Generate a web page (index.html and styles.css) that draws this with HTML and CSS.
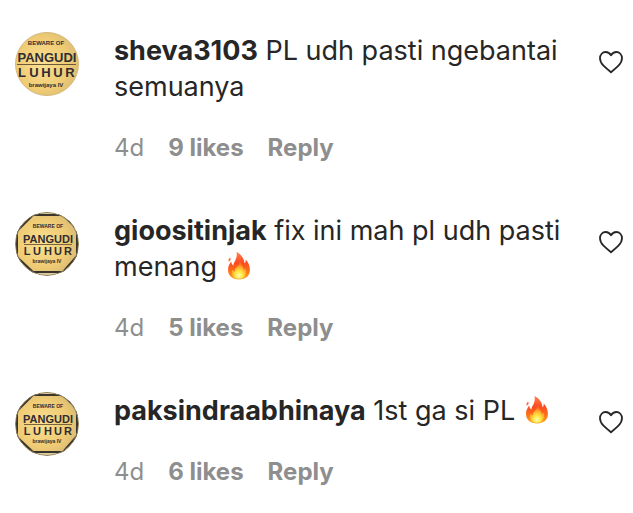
FILE: index.html
```html
<!DOCTYPE html>
<html lang="id">
<head>
<meta charset="utf-8">
<meta name="viewport" content="width=device-width, initial-scale=1">
<title>Comments</title>
<link rel="stylesheet" href="styles.css">
</head>
<body>
<svg class="defs" width="0" height="0" aria-hidden="true">
  <defs>
    <radialGradient id="gold" cx="42%" cy="50%" r="60%">
      <stop offset="0" stop-color="#fbe092"/>
      <stop offset="0.7" stop-color="#efcb74"/>
      <stop offset="1" stop-color="#dcbd75"/>
    </radialGradient>
    <linearGradient id="flame" x1="0" y1="0" x2="0" y2="1">
      <stop offset="0" stop-color="#ff8050"/>
      <stop offset="0.4" stop-color="#fb4a20"/>
      <stop offset="0.75" stop-color="#fd7a18"/>
      <stop offset="1" stop-color="#ffae28"/>
    </linearGradient>
    <radialGradient id="core" cx="50%" cy="82%" r="65%">
      <stop offset="0" stop-color="#fffbb0"/>
      <stop offset="0.4" stop-color="#ffe640"/>
      <stop offset="0.8" stop-color="#ffa52a"/>
      <stop offset="1" stop-color="#ff7a1c"/>
    </radialGradient>
    <clipPath id="round"><circle cx="32" cy="32" r="32"/></clipPath>
    <symbol id="heart" viewBox="0 0 24 24">
      <path d="M12 22.200C10.800 21.200 7.400 18.400 4.500 15.600C2.200 13.300 1 11.200 1 8.200C1 4.600 3.500 2 6.700 2C9 2 10.700 3.200 12 5.300C13.300 3.200 15 2 17.300 2C20.500 2 23 4.600 23 8.200C23 11.200 21.800 13.300 19.500 15.600C16.600 18.400 13.200 21.200 12 22.200Z" fill="none" stroke="#262626" stroke-width="1.800" stroke-linejoin="round"/>
    </symbol>
    <symbol id="fire" viewBox="0 0 28 28">
      <path d="M11.500 0C16.500 2.500 19.500 7 19.500 11.500C20.700 10.500 20.900 9 20.600 7.300C23.500 10.500 25 14.300 24.900 18C24.800 24 20.500 27.500 14 27.500C7.500 27.500 3 24 3 17.800C3 14.500 4.600 11.700 6.200 9.300C6.400 11.500 7 12.900 8.400 13.500C8.500 10 13 6.500 11.500 0Z" fill="url(#flame)"/>
      <path d="M15 9.500C16 13 18.700 14.800 18.700 18C19.800 17.500 20.300 16.500 20.500 15.500C22.500 20.500 20.500 26.700 14 26.700C8.500 26.700 5.500 22.500 7.200 17.200C8 18.700 8.700 19.200 9.700 19.400C9.300 15.500 14.500 14 15 9.500Z" fill="url(#core)"/>
      <path d="M4.800 5.800C5.800 6.300 6 7.200 5.200 8.500L3.800 9.800C3.100 8.500 3.500 7.100 4.800 5.800Z" fill="#fb6844"/>
    </symbol>
    <symbol id="badge-round" viewBox="0 0 64 64">
      <circle cx="32" cy="32" r="31.500" fill="url(#gold)" stroke="#d2b97c"/>
      <g class="badge-text">
        <text x="31" y="13" font-size="6">BEWARE OF</text>
        <text x="32" y="30" font-size="13">PANGUDI</text>
        <text x="7" y="45" font-size="13">L</text>
        <text x="19" y="45" font-size="13">U</text>
        <text x="31" y="45" font-size="13">H</text>
        <text x="43" y="45" font-size="13">U</text>
        <text x="55" y="45" font-size="13">R</text>
        <text x="31" y="55" font-size="6">brawijaya IV</text>
      </g>
      <path d="M2 32.500H61" stroke="#6c5938"/>
    </symbol>
    <symbol id="badge-octagon" viewBox="0 0 64 64">
      <g clip-path="url(#round)">
        <circle cx="32" cy="32" r="32" fill="#dccb9c"/>
        <path d="M18 3H48L62 17V44L48 60H18L2 45V19Z" fill="url(#gold)" stroke="#39342e" stroke-width="2"/>
        <circle cx="32" cy="32" r="31.500" fill="none" stroke="#8d8060"/>
      </g>
      <g class="badge-text">
        <text x="33" y="16" font-size="5">BEWARE OF</text>
        <text x="33" y="31" font-size="11">PANGUDI</text>
        <text x="12" y="43" font-size="11">L</text>
        <text x="22" y="43" font-size="11">U</text>
        <text x="33" y="43" font-size="11">H</text>
        <text x="43" y="43" font-size="11">U</text>
        <text x="53" y="43" font-size="11">R</text>
        <text x="32" y="51" font-size="5">brawijaya IV</text>
      </g>
      <path d="M9 32.500H57" stroke="#79633c"/>
    </symbol>
  </defs>
</svg>
<main class="comments">
  <article class="comment">
    <a class="avatar" href="#" aria-label="sheva3103"><svg viewBox="0 0 64 64"><use href="#badge-round"/></svg></a>
    <div class="body">
      <p class="text"><a class="user" href="#">sheva3103</a> PL udh pasti ngebantai semuanya</p>
      <div class="meta"><time>4d</time><button type="button">9 likes</button><button type="button">Reply</button></div>
    </div>
    <button class="like" type="button" aria-label="Like"><svg><use href="#heart"/></svg></button>
  </article>
  <article class="comment">
    <a class="avatar" href="#" aria-label="gioositinjak"><svg viewBox="0 0 64 64"><use href="#badge-octagon"/></svg></a>
    <div class="body">
      <p class="text"><a class="user" href="#">gioositinjak</a> fix ini mah pl udh pasti menang <svg class="emoji" role="img" aria-label="🔥"><use href="#fire"/></svg></p>
      <div class="meta"><time>4d</time><button type="button">5 likes</button><button type="button">Reply</button></div>
    </div>
    <button class="like" type="button" aria-label="Like"><svg><use href="#heart"/></svg></button>
  </article>
  <article class="comment">
    <a class="avatar" href="#" aria-label="paksindraabhinaya"><svg viewBox="0 0 64 64"><use href="#badge-octagon"/></svg></a>
    <div class="body">
      <p class="text"><a class="user" href="#">paksindraabhinaya</a> 1st ga si PL <svg class="emoji" role="img" aria-label="🔥"><use href="#fire"/></svg></p>
      <div class="meta"><time>4d</time><button type="button">6 likes</button><button type="button">Reply</button></div>
    </div>
    <button class="like" type="button" aria-label="Like"><svg><use href="#heart"/></svg></button>
  </article>
</main>
</body>
</html>
```
FILE: styles.css
```css
* {
  box-sizing: border-box;
}

body {
  margin: 0;
  background: #fff;
  color: #262626;
  font-family: Inter, "Liberation Sans", sans-serif;
}

.defs {
  position: absolute;
}

.comments {
  display: flex;
  flex-direction: column;
  gap: 48px;
  padding: 32px 8px 24px 15px;
}

.comment {
  display: flex;
  align-items: flex-start;
}

.avatar {
  flex: none;
  width: 64px;
  height: 64px;
  margin-right: 35px;
}

.avatar svg {
  display: block;
  width: 64px;
  height: 64px;
}

.badge-text {
  fill: #302d32;
  font-family: "Liberation Sans", sans-serif;
  font-weight: 700;
  text-anchor: middle;
}

.body {
  flex: 1;
  min-width: 0;
  padding-top: 1px;
}

.text {
  margin: 0;
  font-size: 27px;
  line-height: 36px;
}

.user {
  color: inherit;
  font-weight: 700;
  text-decoration: none;
}

.emoji {
  width: 28px;
  height: 28px;
  vertical-align: -4px;
}

.meta {
  display: flex;
  gap: 24px;
  margin-top: 27px;
  color: #8e8e8e;
  font-size: 24px;
  line-height: 32px;
}

button {
  padding: 0;
  border: 0;
  background: none;
  color: inherit;
  font: inherit;
  cursor: pointer;
}

.meta button {
  font-weight: 700;
}

.like {
  flex: none;
  padding: 18px 0;
  margin-right: 2px;
  margin-left: 16px;
}

.like svg {
  display: block;
  width: 24px;
  height: 24px;
}
```
